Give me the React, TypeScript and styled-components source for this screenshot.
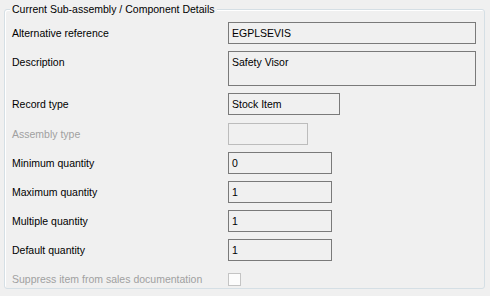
import styled, { createGlobalStyle } from 'styled-components';

const GlobalStyle = createGlobalStyle`
  html, body {
    margin: 0;
    padding: 0;
    background: #f0f0f0;
  }
  body {
    font-family: "Liberation Sans", Arial, sans-serif;
    font-size: 10.5px;
    color: #000;
  }
`;

const Page = styled.div`
  width: 490px;
  height: 296px;
  padding: 9px 0 0 4px;
  box-sizing: border-box;
`;

const Frame = styled.section`
  position: relative;
  width: 481px;
  height: 280px;
  box-sizing: border-box;
  border: 1px solid #d5dfe5;
  border-radius: 3px;
  box-shadow: inset 1px 1px 0 #ffffff;
  padding: 12px 0 0 7px;
  display: flex;
  flex-direction: column;
  gap: 7px;
`;

const Legend = styled.span`
  position: absolute;
  top: -8px;
  left: 5px;
  padding: 0 2px;
  background: #f0f0f0;
  line-height: 14px;
`;

const Row = styled.div<{ $gapTop?: number }>`
  display: flex;
  align-items: flex-start;
  margin-top: ${(p) => p.$gapTop ?? 0}px;
`;

const Label = styled.div<{ $disabled?: boolean; $inline?: boolean }>`
  width: 216px;
  flex: none;
  padding-top: ${(p) => (p.$inline ? 0 : 4)}px;
  line-height: 14px;
  color: ${(p) => (p.$disabled ? '#a0a0a0' : '#000')};
  white-space: nowrap;
`;

const Field = styled.div<{ $width: number; $height?: number; $disabled?: boolean }>`
  width: ${(p) => p.$width}px;
  height: ${(p) => p.$height ?? 22}px;
  box-sizing: border-box;
  border: 1px solid ${(p) => (p.$disabled ? '#bcbcbc' : '#7a7a7a')};
  background: #f0f0f0;
  padding: 3px 0 0 3px;
  line-height: 14px;
  white-space: nowrap;
  overflow: hidden;
`;

const CheckRow = styled.div`
  display: flex;
  align-items: center;
  height: 22px;
  margin-top: 2px;
`;

const Check = styled.span`
  display: block;
  width: 13px;
  height: 13px;
  box-sizing: border-box;
  border: 1px solid #c4c4c4;
  background: #fcfcfc;
`;

type FieldRow = {
  label: string;
  value: string;
  width: number;
  height?: number;
  disabled?: boolean;
  gapTop?: number;
};

const rows: FieldRow[] = [
  { label: 'Alternative reference', value: 'EGPLSEVIS', width: 248 },
  { label: 'Description', value: 'Safety Visor', width: 248, height: 35 },
  { label: 'Record type', value: 'Stock Item', width: 112 },
  { label: 'Assembly type', value: '', width: 80, disabled: true, gapTop: 1 },
  { label: 'Minimum quantity', value: '0', width: 104 },
  { label: 'Maximum quantity', value: '1', width: 104 },
  { label: 'Multiple quantity', value: '1', width: 104 },
  { label: 'Default quantity', value: '1', width: 104 },
];

export default function App() {
  return (
    <>
      <GlobalStyle />
      <Page>
        <Frame>
          <Legend>Current Sub-assembly / Component Details</Legend>
          {rows.map((r) => (
            <Row key={r.label} $gapTop={r.gapTop}>
              <Label $disabled={r.disabled}>{r.label}</Label>
              <Field $width={r.width} $height={r.height} $disabled={r.disabled}>
                {r.value}
              </Field>
            </Row>
          ))}
          <CheckRow>
            <Label $disabled $inline>
              Suppress item from sales documentation
            </Label>
            <Check />
          </CheckRow>
        </Frame>
      </Page>
    </>
  );
}
